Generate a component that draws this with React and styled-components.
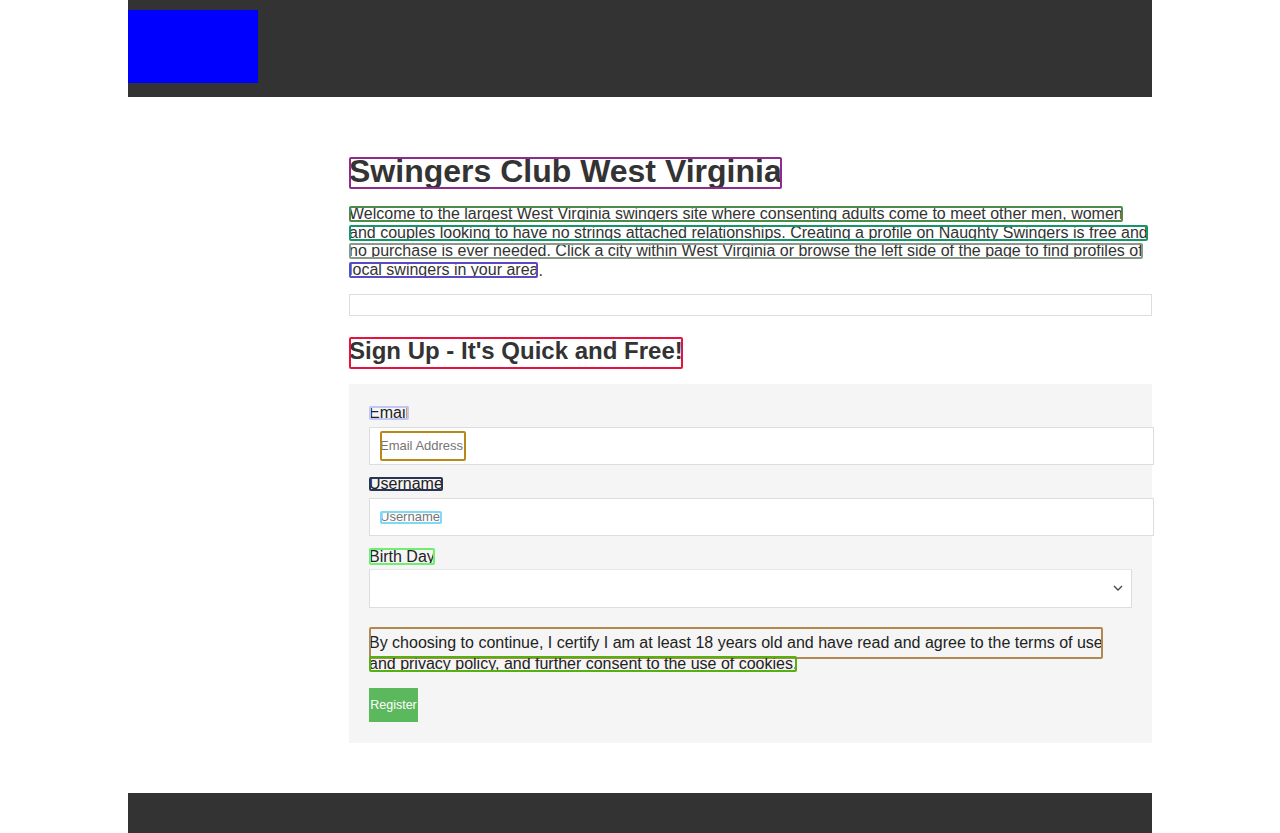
import styled, { createGlobalStyle } from "styled-components";

const GlobalStyle = createGlobalStyle`
  body {
    margin: 0;
    font-family: "Liberation Sans", Arial, sans-serif;
    color: #333;
    background: #fff;
  }
  * { box-sizing: border-box; }
`;

const Page = styled.div`
  width: 1024px;
  margin: 0 auto;
`;

const Header = styled.header`
  height: 97px;
  background: #333;
  padding-top: 10px;
`;

const Logo = styled.div`
  width: 130px;
  height: 73px;
  background: #0000ff;
`;

const Main = styled.main`
  display: grid;
  grid-template-columns: 221px 1fr;
  padding: 60px 0 50px;
`;

const Sidebar = styled.aside``;

const Content = styled.section`
  min-width: 0;
`;

// annotation-style outlined text run
const Mark = styled.span`
  display: inline-block;
  outline: 2px solid ${({ $c }) => $c};
  outline-offset: -2px;
  border-radius: 2px;
  height: ${({ $h }) => $h || 16}px;
  line-height: ${({ $lh, $h }) => $lh || $h || 16}px;
  white-space: nowrap;
  overflow: hidden;
  vertical-align: top;
`;

const Title = styled.h1`
  margin: 0;
  font-size: 32px;
  font-weight: bold;
  height: 32px;
  line-height: 32px;
`;

const Intro = styled.div`
  margin-top: 17px;
  font-size: 16px;
`;

const Line = styled.div`
  height: 18.67px;
`;

const Divider = styled.div`
  margin-top: 13px;
  height: 22px;
  border: 1px solid #ddd;
`;

const SubTitle = styled.h2`
  margin: 21px 0 0;
  font-size: 24px;
  font-weight: bold;
  height: 32px;
  line-height: 32px;
`;

const Panel = styled.form`
  margin-top: 15px;
  background: #f5f5f5;
  padding: 22px 20px 21px;
  height: 359px;
`;

const Label = styled.label`
  display: block;
  font-size: 16px;
  color: #222;
  height: ${({ $h }) => $h || 14}px;
  margin-bottom: ${({ $mb }) => $mb || 7}px;
`;

const Field = styled.div`
  position: relative;
  margin-bottom: 12px;
`;

const Input = styled.input`
  box-sizing: content-box;
  display: block;
  width: 100%;
  height: 36px;
  padding: 0 10px;
  border: 1px solid #ddd;
  background: #fff;
  font-family: "Liberation Sans", Arial, sans-serif;
  font-size: 13px;
  outline: none;
  &::placeholder { color: #757575; }
`;

const Hint = styled.span`
  position: absolute;
  left: 11px;
  top: ${({ $t }) => $t}px;
  width: ${({ $w }) => $w}px;
  height: ${({ $h }) => $h}px;
  border: 2px solid ${({ $c }) => $c};
  border-radius: 2px;
  pointer-events: none;
`;

const SelectWrap = styled.div`
  position: relative;
`;

const Select = styled.select`
  display: block;
  width: 100%;
  height: 39px;
  border: 1px solid #ddd;
  border-top-color: #e6e6e6;
  background: #fff;
  font-size: 13px;
  border-radius: 0;
  appearance: none;
  outline: none;
`;

const Chevron = styled.svg`
  position: absolute;
  right: 9px;
  top: 16px;
  width: 10px;
  height: 6px;
  pointer-events: none;
`;

const Terms = styled.div`
  margin-top: 19px;
  font-size: 16px;
  color: #222;
`;

const Button = styled.button`
  display: block;
  margin-top: 14px;
  width: 49px;
  height: 34px;
  padding: 0;
  border: 0;
  background: #5cb85c;
  color: #fff;
  font-family: "Liberation Sans", Arial, sans-serif;
  font-size: 12.5px;
  line-height: 34px;
`;

const Footer = styled.footer`
  height: 60px;
  background: #333;
`;

export default function App() {
  return (
    <Page>
      <GlobalStyle />
      <Header>
        <Logo />
      </Header>
      <Main>
        <Sidebar />
        <Content>
          <Title>
            <Mark $c="#8e2c8e" $h={32} $lh={29}>Swingers Club West Virginia</Mark>
          </Title>
          <Intro>
            <Line><Mark $c="#4b8b4b">Welcome to the largest West Virginia swingers site where consenting adults come to meet other men, women</Mark></Line>
            <Line><Mark $c="#14956a">and couples looking to have no strings attached relationships. Creating a profile on Naughty Swingers is free and</Mark></Line>
            <Line><Mark $c="#8a9a88">no purchase is ever needed. Click a city within West Virginia or browse the left side of the page to find profiles of</Mark></Line>
            <Line><Mark $c="#5a4bc4">local swingers in your area</Mark>.</Line>
          </Intro>
          <Divider />
          <SubTitle>
            <Mark $c="#e8123f" $h={32} $lh={28}>Sign Up - It's Quick and Free!</Mark>
          </SubTitle>
          <Panel>
            <Label><Mark $c="#c3c6f2" $h={14}>Email</Mark></Label>
            <Field>
              <Input placeholder="Email Address" />
              <Hint $c="#b8891a" $t={4} $w={86} $h={30} />
            </Field>
            <Label><Mark $c="#2a3556" $h={14}>Username</Mark></Label>
            <Field>
              <Input placeholder="Username" />
              <Hint $c="#7fd8f5" $t={13} $w={62} $h={13} />
            </Field>
            <Label $h={17} $mb={4}><Mark $c="#6ef06e" $h={17}>Birth Day</Mark></Label>
            <SelectWrap>
              <Select defaultValue="">
                <option value=""></option>
              </Select>
              <Chevron viewBox="0 0 10 6">
                <path d="M1 1l4 4 4-4" fill="none" stroke="#444" strokeWidth="1.3" />
              </Chevron>
            </SelectWrap>
            <Terms>
              <div><Mark $c="#b08850" $h={32}>By choosing to continue, I certify I am at least 18 years old and have read and agree to the terms of use</Mark></div>
              <div style={{ marginTop: -3 }}><Mark $c="#55b010">and privacy policy, and further consent to the use of cookies.</Mark></div>
            </Terms>
            <Button type="button">Register</Button>
          </Panel>
        </Content>
      </Main>
      <Footer />
    </Page>
  );
}
